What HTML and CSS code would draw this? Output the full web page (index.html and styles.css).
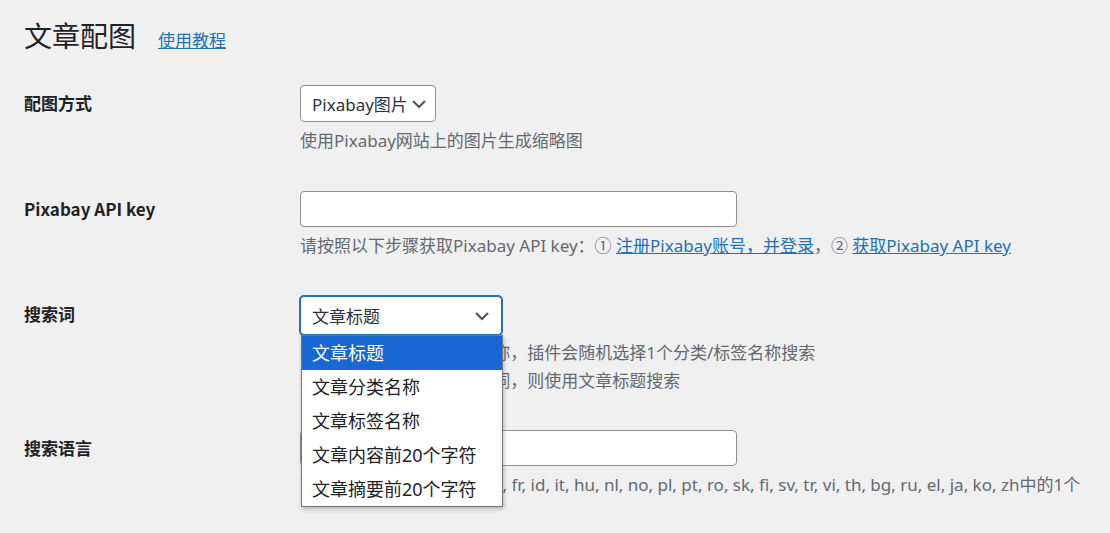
FILE: index.html
```html
<!DOCTYPE html>
<html lang="zh-CN">
<head>
  <meta charset="UTF-8">
  <meta name="viewport" content="width=device-width, initial-scale=1.0">
  <title>文章配图</title>
  <link rel="stylesheet" href="styles.css">
</head>
<body>
  <div class="wrap">
    <div class="page-head">
      <h1>文章配图</h1>
      <a href="#" class="head-link">使用教程</a>
    </div>

    <div class="form-table">
      <!-- 配图方式 -->
      <div class="row">
        <div class="label">配图方式</div>
        <div class="field">
          <div class="select select-small">
            <span>Pixabay图片</span>
            <svg class="chevron" width="16" height="10" viewBox="0 0 16 10"><polyline points="2,2 8,8 14,2" /></svg>
          </div>
          <p class="desc">使用Pixabay网站上的图片生成缩略图</p>
        </div>
      </div>

      <!-- api key -->
      <div class="row">
        <div class="label">Pixabay API key</div>
        <div class="field">
          <div class="input"></div>
          <p class="desc">请按照以下步骤获取Pixabay API key：① <a href="#">注册Pixabay账号，并登录</a>，② <a href="#">获取Pixabay API key</a></p>
        </div>
      </div>

      <!-- 搜索词 -->
      <div class="row">
        <div class="label">搜索词</div>
        <div class="field field-tight">
          <div class="select-wrap">
            <div class="select select-focus">
              <span>文章标题</span>
              <svg class="chevron" width="16" height="10" viewBox="0 0 16 10"><polyline points="2,2 8,8 14,2" /></svg>
            </div>
            <ul class="options">
              <li class="selected">文章标题</li>
              <li>文章分类名称</li>
              <li>文章标签名称</li>
              <li>文章内容前20个字符</li>
              <li>文章摘要前20个字符</li>
            </ul>
          </div>
          <p class="desc">若文章有多个分类/标签名称，插件会随机选择1个分类/标签名称搜索<br>若文章没有分类/标签关键词，则使用文章标题搜索</p>
        </div>
      </div>

      <!-- 搜索语言 -->
      <div class="row">
        <div class="label">搜索语言</div>
        <div class="field">
          <div class="input"></div>
          <p class="desc">可选语言 cs, da, de, en, es, fr, id, it, hu, nl, no, pl, pt, ro, sk, fi, sv, tr, vi, th, bg, ru, el, ja, ko, zh中的1个</p>
        </div>
      </div>
    </div>
  </div>
</body>
</html>
```

FILE: styles.css
```css
body{
  margin: 0;
  padding: 0;
  background-color: #f0f0f1;
  color: #1d2327;
  font-family: "Noto Sans", "Noto Sans CJK SC", sans-serif;
}
.wrap{
  padding: 0 0 0 24px;
}
.page-head{
  display: flex;
  align-items: baseline;
  padding-top: 17px;
  height: 70px;
  box-sizing: border-box;
}
.page-head h1{
  margin: 0;
  font-size: 28px;
  font-weight: 400;
  line-height: 36px;
  color: #1d2327;
  font-family: "Noto Sans CJK SC", sans-serif;
}
.head-link{
  margin-left: 22px;
  font-size: 17px;
  color: #2271b1;
  font-family: "Noto Sans CJK SC", sans-serif;
}
.row{
  display: flex;
}
.label{
  width: 276px;
  flex-shrink: 0;
  padding-top: 20px;
  font-family: "Noto Sans CJK SC", sans-serif;
  font-size: 17px;
  line-height: 26px;
  font-weight: 700;
  color: #1d2327;
}
.field{
  padding: 15px 0 21px;
}
.field-tight{
  padding-bottom: 20px;
}
.desc{
  margin: 5px 0 0;
  font-size: 17px;
  line-height: 28px;
  color: #646970;
}
.desc a{
  color: #2271b1;
}
.input{
  width: 437px;
  height: 36px;
  box-sizing: border-box;
  border: 1px solid #8c8f94;
  border-radius: 4px;
  background-color: #fff;
}
.select{
  display: flex;
  align-items: center;
  justify-content: space-between;
  box-sizing: border-box;
  height: 37px;
  padding: 0 8px 0 11px;
  border: 1px solid #8c8f94;
  border-radius: 4px;
  background-color: #fff;
  font-size: 17px;
  color: #2c3338;
}
.select-small{
  width: 136px;
}
.select-wrap{
  position: relative;
  width: 202px;
  margin-bottom: -1px;
}
.select-focus{
  height: 39px;
  border-color: #2271b1;
  box-shadow: 0 0 0 1px #2271b1;
  padding-right: 11px;
}
.chevron{
  display: block;
}
.chevron polyline{
  fill: none;
  stroke: #50575e;
  stroke-width: 2.2;
}
/* 펼쳐진 옵션 목록 */
.options{
  position: absolute;
  top: 39px;
  left: 1px;
  z-index: 5;
  width: 200px;
  margin: 0;
  padding: 0;
  list-style: none;
  background-color: #fff;
  border: 1px solid #767676;
  box-shadow: 1px 2px 4px rgba(0,0,0,0.25);
}
.options li{
  height: 34px;
  line-height: 34px;
  padding-left: 10px;
  font-size: 18px;
  color: #1d2327;
}
.options li.selected{
  background-color: #1967d2;
  color: #fff;
}
```
